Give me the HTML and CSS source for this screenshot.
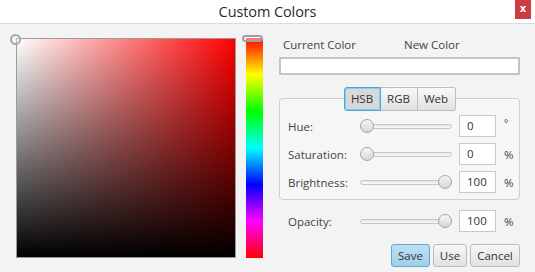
FILE: index.html
```html
<!DOCTYPE html>
<html>
<head>
<meta charset="utf-8">
<link rel="stylesheet" href="styles.css">
</head>
<body>
<div class="window">
  <div class="titlebar">
    <span></span>
    <span class="title">Custom Colors</span>
    <span class="close">x</span>
  </div>
  <div class="content">
    <div class="square">
      <span class="sq-handle"></span>
    </div>
    <div class="huebar">
      <span class="hue-thumb"></span>
    </div>
    <div class="side">
      <div class="swatch-labels">
        <span>Current Color</span>
        <span>New Color</span>
      </div>
      <div class="swatch"></div>
      <div class="tabs">
        <span class="tab active">HSB</span>
        <span class="tab">RGB</span>
        <span class="tab">Web</span>
      </div>
      <div class="panel">
        <div class="row">
          <span class="label">Hue:</span>
          <span class="slider"><span class="track"></span><span class="thumb start"></span></span>
          <span class="field">0</span>
          <span class="unit deg">°</span>
        </div>
        <div class="row">
          <span class="label">Saturation:</span>
          <span class="slider"><span class="track"></span><span class="thumb start"></span></span>
          <span class="field">0</span>
          <span class="unit">%</span>
        </div>
        <div class="row">
          <span class="label">Brightness:</span>
          <span class="slider"><span class="track"></span><span class="thumb end"></span></span>
          <span class="field">100</span>
          <span class="unit">%</span>
        </div>
      </div>
      <div class="row opacity">
        <span class="label">Opacity:</span>
        <span class="slider"><span class="track"></span><span class="thumb end"></span></span>
        <span class="field">100</span>
        <span class="unit">%</span>
      </div>
      <div class="buttons">
        <span class="btn save">Save</span>
        <span class="btn use">Use</span>
        <span class="btn cancel">Cancel</span>
      </div>
    </div>
  </div>
</div>
</body>
</html>
```
FILE: styles.css
```css
* { box-sizing: border-box; }
html, body {
  margin: 0;
  padding: 0;
  width: 535px;
  height: 272px;
  overflow: hidden;
  background: #f3f3f3;
  font-family: "Open Sans", "Noto Sans", sans-serif;
  color: #3a3a3a;
}
.window {
  width: 535px;
  height: 272px;
}
.titlebar {
  height: 24px;
  background: #ffffff;
  border-bottom: 1px solid #dadada;
  display: grid;
  grid-template-columns: 1fr auto 1fr;
  align-items: start;
}
.title {
  font-size: 14.5px;
  line-height: 23px;
  color: #2a2a2a;
  letter-spacing: -0.1px;
}
.close {
  justify-self: end;
  margin-right: 4px;
  width: 16px;
  height: 19px;
  background: #cd3c42;
  color: #fff;
  font-size: 10px;
  font-weight: bold;
  line-height: 18px;
  text-align: center;
  font-family: "DejaVu Sans", sans-serif;
}
.content {
  display: flex;
  align-items: flex-start;
  padding: 14px 0 0 16px;
}
.square {
  position: relative;
  width: 220px;
  height: 220px;
  border: 1px solid #9a9a9a;
  background:
    linear-gradient(to top, #000 0%, rgba(0,0,0,0) 100%),
    linear-gradient(to right, #fff 0%, #ff0000 100%);
}
.sq-handle {
  position: absolute;
  left: -7px;
  top: -5px;
  width: 11px;
  height: 11px;
  border-radius: 50%;
  border: 2px solid #a8a8a8;
  background: rgba(255,255,255,0.3);
}
.huebar {
  position: relative;
  margin-left: 10px;
  width: 17px;
  height: 220px;
  background: linear-gradient(to bottom, #ff0000 0%, #ffff00 16.67%, #00ff00 33.33%, #00ffff 50%, #0000ff 66.67%, #ff00ff 83.33%, #ff0000 100%);
}
.hue-thumb {
  position: absolute;
  left: -4px;
  top: -3px;
  width: 21px;
  height: 7px;
  border-radius: 4px;
  border: 2px solid #a0a0a0;
  background: rgba(255,255,255,0.45);
}
.side {
  margin-left: 16px;
  width: 241px;
  display: flex;
  flex-direction: column;
}
.swatch-labels {
  display: grid;
  grid-template-columns: 121px 1fr;
  padding-left: 4px;
  font-size: 11.5px;
  line-height: 14px;
  color: #444;
}
.swatch {
  margin-top: 5px;
  height: 18px;
  background: #fff;
  border: 2px solid #c4c4c4;
}
.tabs {
  position: relative;
  z-index: 1;
  margin: 12px auto -13px;
  display: flex;
  height: 24px;
}
.tab {
  width: 37px;
  height: 24px;
  font-size: 11.5px;
  line-height: 22px;
  text-align: center;
  color: #333;
  border: 1px solid #bdbdbd;
  background: linear-gradient(#f8f8f8, #e2e2e2);
}
.tab + .tab { border-left: none; }
.tab:first-child { border-radius: 3px 0 0 3px; }
.tab:last-child { width: 38px; border-radius: 0 3px 3px 0; }
.tab.active {
  background: #d8d8d8;
  border: 1px solid #4aa7d6;
  box-shadow: inset 0 0 0 1px #8ccbea;
}
.panel {
  background: #f6f6f6;
  border: 1px solid #cfcfcf;
  border-radius: 4px;
  padding: 16px 0 6px 0;
  display: flex;
  flex-direction: column;
  gap: 6px;
}
.row {
  display: grid;
  grid-template-columns: 72px 92px 37px auto;
  align-items: center;
  padding-left: 8px;
  height: 22px;
  font-size: 11.5px;
  color: #444;
}
.slider {
  position: relative;
  height: 14px;
  display: flex;
  align-items: center;
  margin-right: 7px;
}
.row .slider { width: 92px; }
.row { grid-template-columns: 72px 99px 37px auto; }
.track {
  width: 100%;
  height: 5px;
  border-radius: 3px;
  border: 1px solid #c6c6c6;
  background: linear-gradient(#e6e6e6, #f8f8f8);
}
.thumb {
  position: absolute;
  top: 0;
  width: 14px;
  height: 14px;
  border-radius: 50%;
  border: 1px solid #a5a5a5;
  background: linear-gradient(#f6f6f6, #d6d6d6);
}
.thumb.start { left: 0; }
.thumb.end { right: 0; }
.field {
  height: 22px;
  border: 1px solid #c9c9c9;
  background: #fff;
  padding-left: 7px;
  line-height: 20px;
  color: #333;
}
.unit { padding-left: 8px; }
.unit.deg { font-size: 10px; align-self: start; line-height: 16px; }
.opacity { margin-top: 10px; padding-left: 9px; }
.buttons {
  margin-top: 12px;
  display: flex;
  justify-content: flex-end;
  gap: 3px;
}
.btn {
  height: 23px;
  font-size: 11.5px;
  line-height: 21px;
  text-align: center;
  border: 1px solid #bcbcbc;
  border-radius: 3px;
  color: #333;
  background: linear-gradient(#f7f7f7, #e1e1e1);
}
.btn.save {
  width: 39px;
  border-color: #5fa9cf;
  background: linear-gradient(#bfe0f2, #9fcfe8);
}
.btn.use { width: 34px; }
.btn.cancel { width: 50px; }
```
